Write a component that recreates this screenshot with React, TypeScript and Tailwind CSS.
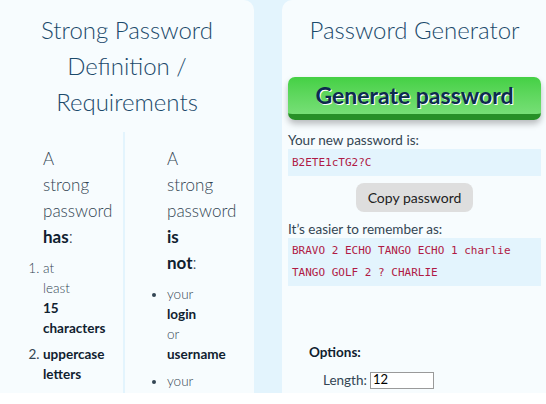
export default function App() {
  return (
    <div className="h-[404px] w-[546px] bg-white font-['Lato','Open_Sans',sans-serif]">
      <div className="flex h-[393px] gap-[28px] bg-[#e3f4fd]">
        <section className="flex w-[254px] flex-col rounded-tr-[10px] bg-[#f7fcfe]">
          <h2 className="px-7 pt-3 text-center text-[24px] font-light leading-[36px] text-[#1b4a6b]">
            Strong Password Definition / Requirements
          </h2>
          <div className="mt-3 flex flex-1 overflow-hidden">
            <div className="w-[125px] border-r-2 border-[#e3f4fd] pl-[43px] pt-[14px]">
              <p className="w-[36px] text-[17px] font-light leading-[26px] text-[#334553]">
                A strong password <b className="font-bold text-[#10212f]">has</b>:
              </p>
              <ol className="mt-2 w-[36px] list-decimal text-[13.5px] leading-5 text-[#334553]">
                <li className="mb-1.5 font-light">
                  at least <b className="font-bold text-[#10212f]">15 characters</b>
                </li>
                <li className="mb-1.5">
                  <b className="font-bold text-[#10212f]">uppercase letters</b>
                </li>
              </ol>
            </div>
            <div className="flex-1 pl-[42px] pt-[14px]">
              <p className="w-[36px] text-[17px] font-light leading-[26px] text-[#334553]">
                A strong password <b className="font-bold text-[#10212f]">is not</b>:
              </p>
              <ul className="mt-2 w-[36px] list-disc text-[13.5px] leading-5 text-[#334553]">
                <li className="mb-[7px] font-light">
                  your <b className="font-bold text-[#10212f]">login</b> or{" "}
                  <b className="font-bold text-[#10212f]">username</b>
                </li>
                <li className="mb-[7px] font-light">your</li>
              </ul>
            </div>
          </div>
        </section>
        <section className="flex flex-1 flex-col rounded-tl-[10px] bg-[#f7fcfe] pl-[6px] pr-[5px]">
          <h2 className="pt-3 text-center text-[24px] font-light leading-[36px] text-[#1b4a6b]">
            Password Generator
          </h2>
          <button className="mt-[29px] h-[43px] rounded-[7px] border-b-[6px] border-[#279027] bg-gradient-to-b from-[#44d044] to-[#76df76] text-[23px] font-bold text-[#0e2a4e] shadow-[0_4px_6px_rgba(0,0,0,0.25)] [text-shadow:1px_1px_0_#ffffff]">
            Generate password
          </button>
          <p className="mt-[11px] text-[13.5px] leading-[18px] text-[#334553]">Your new password is:</p>
          <div className="h-[27px] bg-[#e3f4fd] pl-1 font-['DejaVu_Sans_Mono',monospace] text-[11px] leading-[27px] text-[#b01a45]">
            B2ETE1cTG2?C
          </div>
          <button className="mx-auto mt-[7px] h-[29px] w-[117px] rounded-[8px] bg-[#dedede] text-[14px] text-[#222222]">
            Copy password
          </button>
          <p className="mt-2 text-[13.5px] leading-[18px] text-[#334553]">It’s easier to remember as:</p>
          <div className="bg-[#e3f4fd] py-[2px] pl-1 font-['DejaVu_Sans_Mono',monospace] text-[11px] leading-[22px] text-[#b01a45]">
            BRAVO 2 ECHO TANGO ECHO 1 charlie
            <br />
            TANGO GOLF 2 ? CHARLIE
          </div>
          <p className="mt-[57px] pl-[21px] text-[13.5px] font-bold leading-[18px] text-[#10212f]">Options:</p>
          <label className="mt-[9px] flex items-center gap-[3px] pl-[35px] text-[13.5px] text-[#334553]">
            Length:
            <input
              defaultValue="12"
              className="h-[17px] w-[64px] border border-[#9a9a9a] bg-white px-[2px] text-[13px] text-black"
            />
          </label>
        </section>
      </div>
    </div>
  );
}
